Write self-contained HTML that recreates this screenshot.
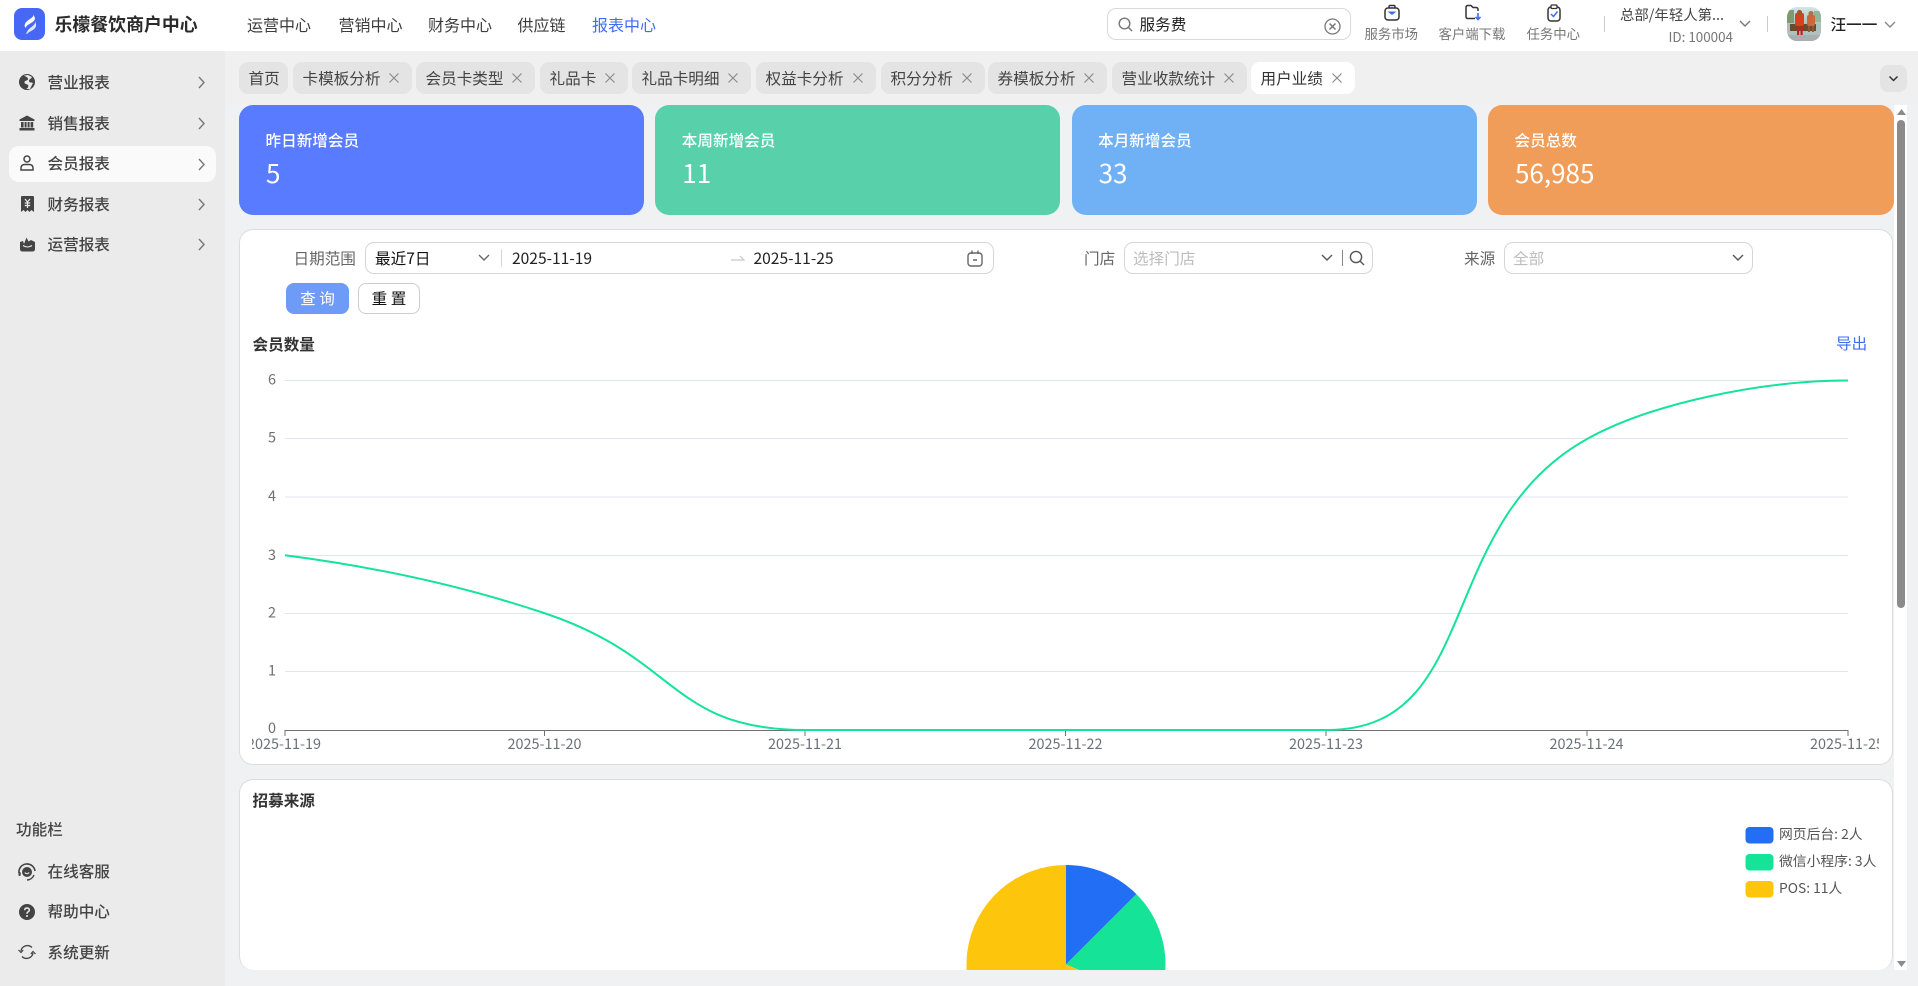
<!DOCTYPE html>
<html lang="zh-CN">
<head>
<meta charset="utf-8">
<title>乐檬餐饮商户中心</title>
<style>
html,body{margin:0;padding:0;width:1918px;height:986px;overflow:hidden;background:#f0f1f3;}
body{position:relative;font-family:"Noto Sans CJK SC","Liberation Sans",sans-serif;color:#333;}
.a,.t{position:absolute;}
.t{white-space:nowrap;line-height:24px;height:24px;}
svg{position:absolute;overflow:visible;}
svg.full{overflow:hidden;}
.tab{position:absolute;top:62px;height:32px;background:#e4e4e4;border-radius:9px;line-height:32px;font-size:15.6px;color:#444;padding-left:9.5px;box-sizing:border-box;white-space:nowrap;}
.tab svg{top:11px;right:13px;}
.card{position:absolute;top:105px;height:110px;border-radius:14px;color:#fff;}
.card .h{position:absolute;left:26.5px;top:22.5px;font-size:15.6px;line-height:24px;font-weight:500;white-space:nowrap;}
.card .v{position:absolute;left:27px;top:50px;font-size:26px;line-height:36px;}
.side{font-size:15.6px;color:#444;font-weight:500;}
.box{position:absolute;top:242px;height:32px;border:1px solid #d6d6d6;border-radius:9px;box-sizing:border-box;background:#fff;}
.lbl{font-size:15.6px;color:#666;}
.nav{font-size:16px;color:#3c3c3c;}
.ml{font-size:13.4px;color:#777;}
.leg{font-size:13.8px;color:#555;}
</style>
</head>
<body>
<!-- header -->
<div class="a" style="left:225px;top:51px;width:1693px;height:54px;background:#f0f0f0;"></div>
<div class="a" style="left:0;top:0;width:1918px;height:51px;background:#fff;"></div>
<div class="a" style="left:14px;top:8px;width:31px;height:32px;background:#4668f5;border-radius:8px;"></div>
<svg style="left:14px;top:8px" width="31" height="32" viewBox="0 0 31 32"><path d="M19 6 C21 10 13 11 11 16 C10 18 11 19 12 20 C12 16 21 15 21 10 Z" fill="#fff"/><path d="M21 13 C22 18 15 19 13 24 C12 25 12 26 13 26 C15 23 23 22 22 16 Z" fill="#dfe6ff"/></svg>
<div class="t" style="left:54.5px;top:12px;font-size:17.9px;font-weight:700;color:#2a2a2a;">乐檬餐饮商户中心</div>

<div class="t nav" style="left:247px;top:12px;">运营中心</div>
<div class="t nav" style="left:338.5px;top:12px;">营销中心</div>
<div class="t nav" style="left:428px;top:12px;">财务中心</div>
<div class="t nav" style="left:517.5px;top:12px;">供应链</div>
<div class="t nav" style="left:592px;top:12px;color:#3f6cf3;">报表中心</div>

<div class="a" style="left:1107px;top:8px;width:243.5px;height:32px;border:1px solid #d9d9d9;border-radius:9px;box-sizing:border-box;"></div>
<svg style="left:1118px;top:17px" width="15" height="15" fill="none" stroke="#777" stroke-width="1.4"><circle cx="6.5" cy="6.5" r="5.3"/><path d="M10.5 10.5 L14 14"/></svg>
<div class="t" style="left:1139.5px;top:12px;font-size:15.6px;color:#222;">服务费</div>
<svg style="left:1324px;top:18px" width="17" height="17" fill="none" stroke="#777" stroke-width="1.3"><circle cx="8.5" cy="8.5" r="7.5"/><path d="M5.5 5.5 L11.5 11.5 M11.5 5.5 L5.5 11.5" stroke-width="1.5"/></svg>

<svg style="left:1383px;top:4px" width="18" height="17" fill="none"><path d="M6 4 V2.5 Q6 1.5 7 1.5 H11 Q12 1.5 12 2.5 V4" stroke="#333" stroke-width="1.4"/><rect x="2" y="4" width="14" height="12" rx="3" stroke="#333" stroke-width="1.5"/><path d="M4.5 7.5 H13.5 L9 11 Z" fill="#3f6cf3"/></svg>
<svg style="left:1464px;top:4px" width="18" height="17" fill="none"><path d="M11 14.5 H4 Q2 14.5 2 12.5 V3.5 Q2 1.5 4 1.5 H7 L9 3.5 H12 Q14 3.5 14 5.5 V7" stroke="#333" stroke-width="1.5"/><path d="M14 9 V15 M11.5 13 L14 15.5 L16.5 13" stroke="#3f6cf3" stroke-width="1.6"/></svg>
<svg style="left:1544.5px;top:4px" width="18" height="18" fill="none"><rect x="3" y="3" width="12" height="14" rx="3" stroke="#333" stroke-width="1.5"/><rect x="6" y="1" width="6" height="3.5" rx="1" fill="#fff" stroke="#333" stroke-width="1.3"/><path d="M6 10 L8.5 12.5 L12.5 7.5" stroke="#3f6cf3" stroke-width="1.5"/></svg>
<div class="t ml" style="left:1364.5px;top:21px;">服务市场</div>
<div class="t ml" style="left:1438.5px;top:21px;">客户端下载</div>
<div class="t ml" style="left:1526.5px;top:21px;">任务中心</div>

<div class="a" style="left:1604px;top:16px;width:1px;height:16px;background:#ccc;"></div>
<div class="t" style="left:1620px;top:3px;font-size:14.4px;color:#444;">总部/年轻人第...</div>
<div class="t" style="left:1668.5px;top:24px;font-size:13.4px;color:#777;">ID: 100004</div>
<svg style="left:1739px;top:20px" width="12" height="7" fill="none" stroke="#777" stroke-width="1.4"><path d="M1 1 L6 6 L11 1"/></svg>
<div class="a" style="left:1767px;top:16px;width:1px;height:16px;background:#ccc;"></div>
<svg style="left:1787px;top:7px" width="34" height="34" viewBox="0 0 34 34"><defs><clipPath id="av"><rect width="34" height="34" rx="10"/></clipPath><linearGradient id="sk" x1="0" y1="0" x2="0" y2="1"><stop offset="0" stop-color="#d4e4e8"/><stop offset=".55" stop-color="#a8c0b8"/><stop offset="1" stop-color="#bcc1c3"/></linearGradient></defs><g clip-path="url(#av)"><rect width="34" height="34" fill="url(#sk)"/><rect x="0" y="3" width="7" height="13" fill="#7d9a70"/><rect x="27" y="4" width="7" height="11" fill="#94b59a"/><rect x="3" y="17" width="26" height="7" fill="#6a4a2a"/><rect x="8" y="6" width="9" height="13" rx="2" fill="#d9401f"/><circle cx="12.5" cy="5.5" r="2.6" fill="#a5552d"/><rect x="20" y="8" width="8" height="11" rx="2" fill="#c96a3a"/><circle cx="24" cy="6.5" r="2.6" fill="#b0714a"/><rect x="10" y="19" width="2.2" height="10" fill="#b22"/><rect x="13.5" y="19" width="2.2" height="10" fill="#b22"/><rect x="21" y="19" width="2" height="6" fill="#8a5a3a"/><rect x="25" y="19" width="2" height="6" fill="#8a5a3a"/><rect y="28" width="34" height="6" fill="#a9aeb0"/></g></svg>
<div class="t" style="left:1830.5px;top:12px;font-size:15.6px;color:#222;font-weight:500;">汪一一</div>
<svg style="left:1884px;top:21px" width="12" height="7" fill="none" stroke="#888" stroke-width="1.4"><path d="M1 1 L6 6 L11 1"/></svg>

<!-- sidebar -->
<div class="a" style="left:0;top:51px;width:225px;height:935px;background:#ebebeb;"></div>
<div class="a" style="left:9px;top:146px;width:207px;height:36px;border-radius:10px;background:#fafafa;"></div>

<svg style="left:19px;top:74px" width="16" height="16" viewBox="0 0 16 16"><circle cx="8" cy="8" r="8" fill="#444"/><path d="M5 1.5 C7 3 9 3 9 5 C9 7 6 6 5.5 8 C5 10 8 10 9 11 C10 13 8 15 7 15 L11 15 L14 9 C12 8 10 9 10 7 C10 5 12 5 13 3 L9 1 Z" fill="#ebebeb"/></svg>
<svg style="left:19px;top:115px" width="16" height="16" viewBox="0 0 16 16" fill="#444"><path d="M8 0.5 L15.5 4.5 V6 H0.5 V4.5 Z"/><rect x="2" y="7" width="2.6" height="5.5"/><rect x="5.6" y="7" width="2" height="5.5"/><rect x="8.6" y="7" width="2" height="5.5"/><rect x="11.6" y="7" width="2.6" height="5.5"/><rect x="0.5" y="13" width="15" height="2.5"/></svg>
<svg style="left:20px;top:155px" width="14" height="16" viewBox="0 0 14 16" fill="none" stroke="#444" stroke-width="1.5"><circle cx="7" cy="4" r="3"/><path d="M1 15 V13 Q1 9.5 5 9.5 H9 Q13 9.5 13 13 V15 Z"/></svg>
<svg style="left:21px;top:196px" width="13" height="16" viewBox="0 0 13 16"><path d="M0 1 Q0 0 1 0 H12 Q13 0 13 1 V16 L10.5 14 L8.5 16 L6.5 14 L4.5 16 L2.5 14 L0 16 Z" fill="#444"/><path d="M4 3 L6.5 6 L9 3 M3.8 7 H9.2 M3.8 9.5 H9.2 M6.5 6 V12" stroke="#ebebeb" stroke-width="1.2" fill="none"/></svg>
<svg style="left:19.5px;top:236px" width="15" height="16" viewBox="0 0 15 16"><path d="M0 6 L3 5 L4 8 L6.5 1.5 L8.5 5.5 L11 4 L15 6 V13 Q15 15.5 12.5 15.5 H2.5 Q0 15.5 0 13 Z" fill="#444"/><path d="M3 9.5 Q7.5 12.5 12 9.5" stroke="#ebebeb" stroke-width="1.1" fill="none"/></svg>

<div class="t side" style="left:47.5px;top:70px;">营业报表</div>
<div class="t side" style="left:47.5px;top:111px;">销售报表</div>
<div class="t side" style="left:47.5px;top:151px;">会员报表</div>
<div class="t side" style="left:47.5px;top:192px;">财务报表</div>
<div class="t side" style="left:47.5px;top:232px;">运营报表</div>
<svg style="left:198px;top:76px" width="7" height="13" fill="none" stroke="#777" stroke-width="1.4"><path d="M1 1 L6 6.5 L1 12"/></svg>
<svg style="left:198px;top:117px" width="7" height="13" fill="none" stroke="#777" stroke-width="1.4"><path d="M1 1 L6 6.5 L1 12"/></svg>
<svg style="left:198px;top:158px" width="7" height="13" fill="none" stroke="#777" stroke-width="1.4"><path d="M1 1 L6 6.5 L1 12"/></svg>
<svg style="left:198px;top:198px" width="7" height="13" fill="none" stroke="#777" stroke-width="1.4"><path d="M1 1 L6 6.5 L1 12"/></svg>
<svg style="left:198px;top:238px" width="7" height="13" fill="none" stroke="#777" stroke-width="1.4"><path d="M1 1 L6 6.5 L1 12"/></svg>

<div class="t side" style="left:16px;top:817px;">功能栏</div>
<svg style="left:18px;top:863px" width="18" height="18" viewBox="0 0 18 18" fill="none" stroke="#444"><path d="M1 10 A8 8 0 0 1 17 8" stroke-width="1.6"/><path d="M16 12 A8 8 0 0 1 9 17" stroke-width="1.4"/><circle cx="9" cy="9" r="5" fill="#444" stroke="none"/><path d="M6.8 9.5 Q9 12 11.2 9.5" stroke="#ebebeb" stroke-width="1.1"/><rect x="0.5" y="9" width="2.2" height="4" rx="1" fill="#444" stroke="none"/></svg>
<svg style="left:19px;top:904px" width="16" height="16" viewBox="0 0 16 16"><circle cx="8" cy="8" r="8" fill="#444"/><path d="M5.7 6.2 Q5.8 4 8 4 Q10.3 4 10.3 6 Q10.3 7.2 9 7.9 Q8 8.5 8 9.7" stroke="#ebebeb" stroke-width="1.5" fill="none"/><circle cx="8" cy="12" r="1" fill="#ebebeb"/></svg>
<svg style="left:18px;top:944px" width="18" height="16" viewBox="0 0 18 16" fill="none" stroke="#444" stroke-width="1.3"><path d="M3 7 A6.5 6.5 0 0 1 14 3.5"/><path d="M15 9 A6.5 6.5 0 0 1 4 12.5"/><path d="M0.5 6 L3 8.5 L5.2 6" stroke-width="1.2"/><path d="M12.8 10 L15 7.5 L17.5 10" stroke-width="1.2"/></svg>
<div class="t side" style="left:47.5px;top:859px;">在线客服</div>
<div class="t side" style="left:47.5px;top:899px;">帮助中心</div>
<div class="t side" style="left:47.5px;top:940px;">系统更新</div>

<!-- tabs -->
<div class="tab" style="left:239px;width:49px;">首页</div>
<div class="tab" style="left:293px;width:118.5px;">卡模板分析<svg width="10" height="10" fill="none" stroke="#888" stroke-width="1.1"><path d="M0.5 0.5 L9.5 9.5 M9.5 0.5 L0.5 9.5"/></svg></div>
<div class="tab" style="left:416px;width:119px;">会员卡类型<svg width="10" height="10" fill="none" stroke="#888" stroke-width="1.1"><path d="M0.5 0.5 L9.5 9.5 M9.5 0.5 L0.5 9.5"/></svg></div>
<div class="tab" style="left:540px;width:88px;">礼品卡<svg width="10" height="10" fill="none" stroke="#888" stroke-width="1.1"><path d="M0.5 0.5 L9.5 9.5 M9.5 0.5 L0.5 9.5"/></svg></div>
<div class="tab" style="left:632px;width:119px;">礼品卡明细<svg width="10" height="10" fill="none" stroke="#888" stroke-width="1.1"><path d="M0.5 0.5 L9.5 9.5 M9.5 0.5 L0.5 9.5"/></svg></div>
<div class="tab" style="left:756px;width:120px;">权益卡分析<svg width="10" height="10" fill="none" stroke="#888" stroke-width="1.1"><path d="M0.5 0.5 L9.5 9.5 M9.5 0.5 L0.5 9.5"/></svg></div>
<div class="tab" style="left:881px;width:104px;">积分分析<svg width="10" height="10" fill="none" stroke="#888" stroke-width="1.1"><path d="M0.5 0.5 L9.5 9.5 M9.5 0.5 L0.5 9.5"/></svg></div>
<div class="tab" style="left:988px;width:119px;">券模板分析<svg width="10" height="10" fill="none" stroke="#888" stroke-width="1.1"><path d="M0.5 0.5 L9.5 9.5 M9.5 0.5 L0.5 9.5"/></svg></div>
<div class="tab" style="left:1112px;width:135px;">营业收款统计<svg width="10" height="10" fill="none" stroke="#888" stroke-width="1.1"><path d="M0.5 0.5 L9.5 9.5 M9.5 0.5 L0.5 9.5"/></svg></div>
<div class="tab" style="left:1251px;width:104px;background:#fff;color:#333;">用户业绩<svg width="10" height="10" fill="none" stroke="#888" stroke-width="1.1"><path d="M0.5 0.5 L9.5 9.5 M9.5 0.5 L0.5 9.5"/></svg></div>
<div class="a" style="left:1880px;top:65px;width:27px;height:27px;background:#e4e4e4;border-radius:8px;"></div>
<svg style="left:1889px;top:76px" width="9" height="6" fill="none" stroke="#333" stroke-width="1.5"><path d="M0.5 0.5 L4.5 4.5 L8.5 0.5"/></svg>

<!-- cards -->
<div class="card" style="left:239px;width:405px;background:#597bff;"><div class="h">昨日新增会员</div><div class="v">5</div></div>
<div class="card" style="left:655.3px;width:405px;background:#58d1ab;"><div class="h">本周新增会员</div><div class="v">11</div></div>
<div class="card" style="left:1071.6px;width:405.4px;background:#70b1f5;"><div class="h">本月新增会员</div><div class="v">33</div></div>
<div class="card" style="left:1488px;width:405.5px;background:#f19d5a;"><div class="h">会员总数</div><div class="v">56,985</div></div>

<!-- scrollbar -->
<div class="a" style="left:1894px;top:105px;width:12.7px;height:865px;background:#fff;"></div>
<div class="a" style="left:1897px;top:120px;width:7.5px;height:488px;background:#8b8b8b;border-radius:4px;"></div>
<svg style="left:1896.5px;top:109px" width="9" height="6"><path d="M4.5 0 L9 6 H0 Z" fill="#8b8b8b"/></svg>
<svg style="left:1896.5px;top:961px" width="9" height="6"><path d="M4.5 6 L9 0 H0 Z" fill="#8b8b8b"/></svg>

<!-- panel 1 -->
<div class="a" style="left:239px;top:229px;width:1654px;height:536px;background:#fff;border:1px solid #dcdcdc;border-radius:14px;box-sizing:border-box;"></div>

<div class="t lbl" style="left:293.5px;top:246px;">日期范围</div>
<div class="box" style="left:365px;width:629px;"></div>
<div class="t" style="left:375px;top:246px;font-size:15.6px;color:#111;">最近7日</div>
<svg style="left:478px;top:254px" width="12" height="7" fill="none" stroke="#666" stroke-width="1.4"><path d="M1 1 L6 6 L11 1"/></svg>
<div class="a" style="left:501px;top:249px;width:1px;height:18px;background:#d6d6d6;"></div>
<div class="t" style="left:512px;top:246px;font-size:15.6px;color:#222;">2025-11-19</div>
<svg style="left:731px;top:255px" width="14" height="6" fill="none" stroke="#c8c8c8" stroke-width="1.2"><path d="M0 5 H13 L9 1"/></svg>
<div class="t" style="left:753.5px;top:246px;font-size:15.6px;color:#222;">2025-11-25</div>
<svg style="left:967px;top:250px" width="16" height="17" fill="none" stroke="#666" stroke-width="1.4"><rect x="1" y="3" width="14" height="13" rx="3"/><path d="M5 0.5 V4 M11 0.5 V4 M6 10 H10"/></svg>

<div class="a" style="left:286px;top:283px;width:63px;height:31px;background:#6e9bf8;border-radius:8px;color:#fff;text-align:center;line-height:31px;font-size:15.6px;">查 询</div>
<div class="a" style="left:358px;top:283px;width:62px;height:31px;background:#fff;border:1px solid #ccc;border-radius:8px;box-sizing:border-box;color:#111;text-align:center;line-height:29px;font-size:15.6px;">重 置</div>

<div class="t lbl" style="left:1084px;top:246px;">门店</div>
<div class="box" style="left:1124px;width:248.5px;"></div>
<div class="t" style="left:1133px;top:246px;font-size:15.6px;color:#bdbdbd;">选择门店</div>
<svg style="left:1321px;top:254px" width="12" height="7" fill="none" stroke="#555" stroke-width="1.4"><path d="M1 1 L6 6 L11 1"/></svg>
<div class="a" style="left:1342px;top:250px;width:1px;height:16px;background:#888;"></div>
<svg style="left:1349px;top:250px" width="16" height="16" fill="none" stroke="#555" stroke-width="1.4"><circle cx="7" cy="7" r="5.6"/><path d="M11 11 L15 15"/></svg>

<div class="t lbl" style="left:1464px;top:246px;">来源</div>
<div class="box" style="left:1504px;width:248.5px;"></div>
<div class="t" style="left:1513px;top:246px;font-size:15.6px;color:#bdbdbd;">全部</div>
<svg style="left:1732px;top:254px" width="12" height="7" fill="none" stroke="#555" stroke-width="1.4"><path d="M1 1 L6 6 L11 1"/></svg>

<div class="t" style="left:252.5px;top:332px;font-size:15.6px;font-weight:700;color:#333;">会员数量</div>
<div class="t" style="left:1836px;top:331px;font-size:15.6px;color:#3f6cf3;">导出</div>

<!-- chart -->
<svg class="full" style="left:0;top:0" width="1918" height="986">
<defs><clipPath id="cc"><rect x="252" y="360" width="1627" height="400"/></clipPath></defs>
<g stroke="#e0e6f1" stroke-width="1">
<line x1="285" x2="1848" y1="380.5" y2="380.5"/>
<line x1="285" x2="1848" y1="438.5" y2="438.5"/>
<line x1="285" x2="1848" y1="497" y2="497"/>
<line x1="285" x2="1848" y1="555.5" y2="555.5"/>
<line x1="285" x2="1848" y1="613.5" y2="613.5"/>
<line x1="285" x2="1848" y1="671.5" y2="671.5"/>
</g>
<line x1="285" x2="1848" y1="730.5" y2="730.5" stroke="#6e7079"/>
<g stroke="#6e7079"><line x1="285" x2="285" y1="730" y2="736"/><line x1="544.5" x2="544.5" y1="730" y2="736"/><line x1="805" x2="805" y1="730" y2="736"/><line x1="1065.5" x2="1065.5" y1="730" y2="736"/><line x1="1326" x2="1326" y1="730" y2="736"/><line x1="1587" x2="1587" y1="730" y2="736"/><line x1="1848" x2="1848" y1="730" y2="736"/></g>
<g fill="#6e7079" font-size="14.4" text-anchor="end">
<text x="276" y="384.5">6</text><text x="276" y="442.5">5</text><text x="276" y="501">4</text><text x="276" y="560">3</text><text x="276" y="617.5">2</text><text x="276" y="675.5">1</text><text x="276" y="733">0</text>
</g>
<g fill="#6e7079" font-size="14.4" text-anchor="middle" clip-path="url(#cc)">
<text x="284" y="749">2025-11-19</text><text x="544.5" y="749">2025-11-20</text><text x="805" y="749">2025-11-21</text><text x="1065.5" y="749">2025-11-22</text><text x="1326" y="749">2025-11-23</text><text x="1586.5" y="749">2025-11-24</text><text x="1847" y="749">2025-11-25</text>
</g>
<path d="M285 555.25 C372 566.5 459 584.5 545.5 613.5 C680.1 658.6 669.8 730 806 730 C930.3 730 936.25 730 1066.5 730 C1196.75 730 1222.8 730 1327 730 C1483.3 730 1432.8 524 1587.5 438.75 C1650 404 1760 380.5 1848 380.5" fill="none" stroke="#14e39a" stroke-width="2"/>
</svg>

<!-- panel 2 -->
<div class="a" style="left:239px;top:779px;width:1654px;height:191px;background:#fff;border:1px solid #dcdcdc;border-bottom:none;border-radius:14px;box-sizing:border-box;"></div>
<div class="t" style="left:252.5px;top:788px;font-size:15.6px;font-weight:700;color:#333;">招募来源</div>
<svg class="full" style="left:0;top:0" width="1918" height="986">
<defs><clipPath id="pc"><rect x="900" y="850" width="400" height="120"/></clipPath></defs>
<g clip-path="url(#pc)">
<path d="M1066 964.5 L1066 865 A99.5 99.5 0 0 1 1136.4 894.1 Z" fill="#226ff5"/>
<path d="M1066 964.5 L1136.4 894.1 A99.5 99.5 0 0 1 1157.9 1002.6 Z" fill="#14e398"/>
<path d="M1066 964.5 L1157.9 1002.6 A99.5 99.5 0 1 1 1066 865 Z" fill="#fec50d"/>
</g>
<rect x="1745.5" y="827" width="28" height="16.5" rx="4" fill="#226ff5"/>
<rect x="1745.5" y="854" width="28" height="16.5" rx="4" fill="#14e398"/>
<rect x="1745.5" y="881" width="28" height="16.5" rx="4" fill="#fec50d"/>
</svg>
<div class="t leg" style="left:1779px;top:821px;">网页后台: 2人</div>
<div class="t leg" style="left:1779px;top:848px;">微信小程序: 3人</div>
<div class="t leg" style="left:1779px;top:875px;">POS: 11人</div>
</body>
</html>
